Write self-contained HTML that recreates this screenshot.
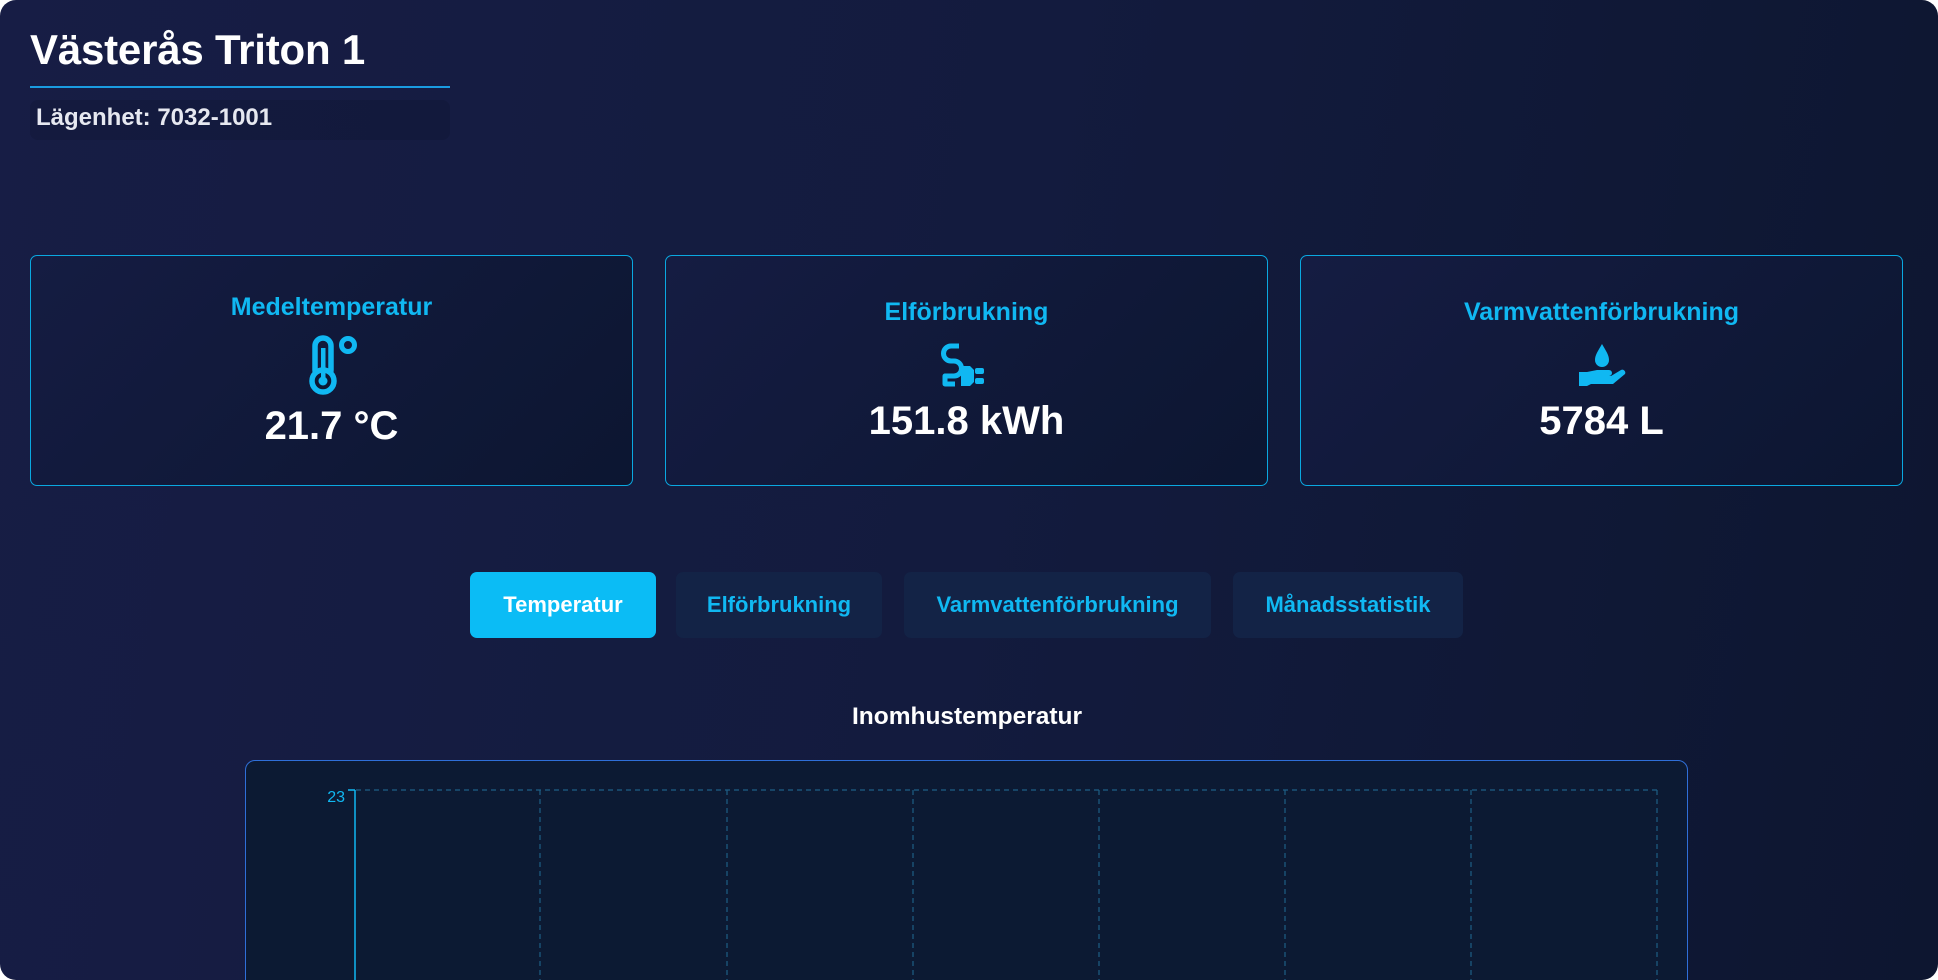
<!DOCTYPE html>
<html><head><meta charset="utf-8"><style>
*{margin:0;padding:0;box-sizing:border-box}
html,body{width:1938px;height:980px;overflow:hidden;background:#fff;font-family:"Liberation Sans",sans-serif}
.page{position:absolute;left:0;top:0;width:1938px;height:980px;border-radius:16px;background:linear-gradient(100deg,#171d45 0%,#131b3e 50%,#0d1630 100%);overflow:hidden}
h1{position:absolute;left:30px;top:26px;font-size:42px;font-weight:700;color:#fff;letter-spacing:-0.2px}
.ul{position:absolute;left:30px;top:86px;width:420px;height:2px;background:#1a9be0}
.apt{position:absolute;left:30px;top:100px;width:420px;height:40px;border-radius:8px;background:rgba(10,15,40,0.2);color:#e6e8f0;font-size:24px;font-weight:700;padding:4px 0 0 6px}
.card{position:absolute;top:255px;width:603px;height:231px;border:1.5px solid #0aa8e0;border-radius:7px;background:linear-gradient(135deg,#151c42,#0c1631);text-align:center}
.card .l{position:absolute;left:0;right:0;font-size:25px;font-weight:700;color:#10b8f2}
.card .v{position:absolute;left:0;right:0;font-size:40px;font-weight:700;color:#fff}
.card svg{position:absolute;left:50%;transform:translateX(-50%)}
.tab{position:absolute;top:572px;height:66px;border-radius:7px;background:#132346;color:#10b8f2;font-size:22px;font-weight:700;text-align:center;line-height:66px}
.tab.a{background:#0bbcf5;color:#fff}
.ct{position:absolute;left:0;width:1934px;top:703px;text-align:center;color:#fff;font-size:24.5px;font-weight:700}
.chart{position:absolute;left:245px;top:760px;width:1443px;height:260px;border:1.5px solid #2f6fd8;border-radius:10px;background:#0c1a33}
</style></head><body><div class="page">
<h1>Västerås Triton 1</h1>
<div class="ul"></div>
<div class="apt">Lägenhet: 7032-1001</div>

<div class="card" style="left:30px">
<div class="l" style="top:37px">Medeltemperatur</div>
<svg style="top:78px" width="52" height="62" viewBox="0 0 52 62"><rect x="9" y="4" width="16" height="40" rx="8" fill="none" stroke="#10b8f2" stroke-width="5.5"/><circle cx="17" cy="47" r="11" fill="#0d1632" stroke="#10b8f2" stroke-width="5.5"/><rect x="15" y="14" width="4.5" height="32" fill="#10b8f2"/><circle cx="17" cy="47" r="4.5" fill="#10b8f2"/><circle cx="42" cy="11" r="6.5" fill="none" stroke="#10b8f2" stroke-width="5"/></svg>
<div class="v" style="top:148px">21.7 °C</div>
</div>

<div class="card" style="left:665px">
<div class="l" style="top:42px">Elförbrukning</div>
<svg style="top:86px" width="56" height="48" viewBox="0 0 56 48"><path d="M20 4 H12 a7.5 7.5 0 0 0 0 15 h3 a7.5 7.5 0 0 1 0 15 H6 V42 h10" fill="none" stroke="#10b8f2" stroke-width="5" stroke-linejoin="round"/><path d="M22 24 h9 l4 4 v12 l-4 4 h-9 z" fill="#10b8f2"/><rect x="36" y="26" width="9" height="6" rx="2" fill="#10b8f2"/><rect x="36" y="36" width="9" height="6" rx="2" fill="#10b8f2"/></svg>
<div class="v" style="top:143px">151.8 kWh</div>
</div>

<div class="card" style="left:1300px">
<div class="l" style="top:42px">Varmvattenförbrukning</div>
<svg style="top:86px" width="50" height="46" viewBox="0 0 50 46"><path d="M25 2 C21 9 18 13 18 18 a7 7 0 0 0 14 0 C32 13 29 9 25 2z" fill="#10b8f2"/><path d="M2 30 h8 l10 -2 h12 a3 3 0 0 1 0 6 h-10 h12 l10 -6 a3 3 0 0 1 4 4 l-12 10 H14 l-4 2 H2z" fill="#10b8f2"/></svg>
<div class="v" style="top:143px">5784 L</div>
</div>

<div class="tab a" style="left:470px;width:186px">Temperatur</div>
<div class="tab" style="left:676px;width:206px">Elförbrukning</div>
<div class="tab" style="left:904px;width:307px">Varmvattenförbrukning</div>
<div class="tab" style="left:1233px;width:230px">Månadsstatistik</div>

<div class="ct">Inomhustemperatur</div>
<div class="chart"></div>
<svg style="position:absolute;left:0;top:0" width="1938" height="980">
<g stroke="#1e5f86" stroke-width="1.2" stroke-dasharray="5 4" fill="none">
<line x1="356" y1="790" x2="1657" y2="790"/>
<line x1="540" y1="790" x2="540" y2="980"/><line x1="727" y1="790" x2="727" y2="980"/><line x1="913" y1="790" x2="913" y2="980"/><line x1="1099" y1="790" x2="1099" y2="980"/><line x1="1285" y1="790" x2="1285" y2="980"/><line x1="1471" y1="790" x2="1471" y2="980"/><line x1="1657" y1="790" x2="1657" y2="980"/>
</g>
<line x1="355" y1="790" x2="355" y2="980" stroke="#10b8f2" stroke-width="1.5"/>
<line x1="348" y1="790" x2="355" y2="790" stroke="#10b8f2" stroke-width="1.5"/>
<text x="345" y="802" text-anchor="end" fill="#10b8f2" font-family="Liberation Sans" font-size="16">23</text>
</svg>
</div></body></html>
